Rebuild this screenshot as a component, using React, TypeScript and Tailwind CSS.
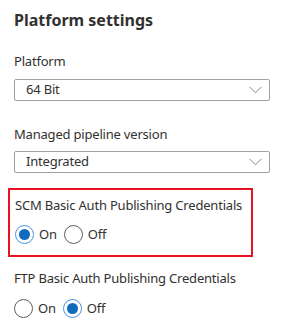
import React from "react";

function Chevron() {
  return (
    <svg width="13" height="8" viewBox="0 0 13 8" fill="none">
      <path d="M0.5 0.8 L6.5 6.8 L12.5 0.8" stroke="#8a8886" strokeWidth="1" />
    </svg>
  );
}

function Select({ value }: { value: string }) {
  return (
    <div className="flex h-[22px] w-[256px] items-center justify-between rounded-[2px] border border-[#a19f9d] pl-[11px] pr-[7px] text-[13px] tracking-[-0.2px] text-[#323130]">
      <span>{value}</span>
      <Chevron />
    </div>
  );
}

function Radio({ checked, label }: { checked: boolean; label: string }) {
  return (
    <div className="flex items-center gap-[5px]">
      <div
        className={
          "flex h-[19px] w-[19px] items-center justify-center rounded-full border " +
          (checked ? "border-[#4a94e0]" : "border-[#605e5c]")
        }
      >
        {checked ? <div className="h-[11px] w-[11px] rounded-full bg-[#0f6cbd]" /> : null}
      </div>
      <span className="text-[13px] tracking-[-0.2px] text-[#323130]">{label}</span>
    </div>
  );
}

export default function App() {
  return (
    <div
      className="h-[326px] w-[283px] bg-white text-[#323130]"
      style={{ fontFamily: '"Noto Sans", "Open Sans", sans-serif' }}
    >
      <div className="pl-[14px] pt-[9px]">
        <div className="text-[16px] font-bold leading-[22px] text-[#323130]">Platform settings</div>
        <div className="mt-[21px] text-[13px] leading-[18px] tracking-[-0.2px]">Platform</div>
        <div className="mt-[9px]">
          <Select value="64 Bit" />
        </div>
        <div className="mt-[24px] text-[13px] leading-[18px] tracking-[-0.2px]">Managed pipeline version</div>
        <div className="mt-[8px]">
          <Select value="Integrated" />
        </div>
      </div>
      <div className="ml-[8px] mt-[15px] w-[245px] border-2 border-[#e81123] pb-[10px] pl-[5px] pt-[6px]">
        <div className="text-[13px] leading-[18px] tracking-[-0.2px]">SCM Basic Auth Publishing Credentials</div>
        <div className="mt-[11px] flex gap-[7px]">
          <Radio checked label="On" />
          <Radio checked={false} label="Off" />
        </div>
      </div>
      <div className="pl-[14px] pt-[12px]">
        <div className="text-[13px] leading-[18px] tracking-[-0.2px]">FTP Basic Auth Publishing Credentials</div>
        <div className="mt-[12px] flex gap-[7px]">
          <Radio checked={false} label="On" />
          <Radio checked label="Off" />
        </div>
      </div>
    </div>
  );
}
